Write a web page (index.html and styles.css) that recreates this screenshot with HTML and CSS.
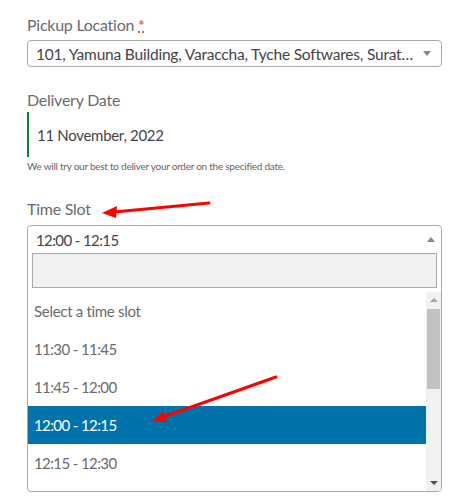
FILE: index.html
```html
<!DOCTYPE html>
<html>
<head>
<meta charset="utf-8">
<link rel="stylesheet" href="styles.css">
</head>
<body>
<div class="form">
  <div class="field">
    <label class="label">Pickup Location <abbr class="required" title="required">*</abbr></label>
    <div class="select">
      <span class="select-text">101, Yamuna Building, Varaccha, Tyche Softwares, Surat…</span>
      <span class="caret-down"></span>
    </div>
  </div>

  <div class="field field-date">
    <label class="label">Delivery Date</label>
    <div class="date-box">11 November, 2022</div>
    <p class="help">We will try our best to deliver your order on the specified date.</p>
  </div>

  <div class="field field-slot">
    <label class="label label-slot">Time Slot</label>
    <div class="s2">
      <div class="s2-selection">
        <span class="s2-text">12:00 - 12:15</span>
        <span class="caret-up"></span>
      </div>
      <div class="s2-search-wrap"><div class="s2-search"></div></div>
      <div class="s2-results">
        <ul class="s2-list">
          <li class="s2-item">Select a time slot</li>
          <li class="s2-item">11:30 - 11:45</li>
          <li class="s2-item">11:45 - 12:00</li>
          <li class="s2-item s2-item-active">12:00 - 12:15</li>
          <li class="s2-item">12:15 - 12:30</li>
        </ul>
        <div class="scrollbar">
          <span class="sb-up"></span>
          <span class="sb-thumb"></span>
          <span class="sb-down"></span>
        </div>
      </div>
    </div>
  </div>
</div>

<svg class="annotations" width="471" height="502" viewBox="0 0 471 502">
  <line x1="209" y1="203" x2="114" y2="212" stroke="#f00" stroke-width="3" stroke-linecap="round"/>
  <polygon points="102,213 117,206 116,218" fill="#f00"/>
  <line x1="276" y1="377" x2="163" y2="417" stroke="#f00" stroke-width="3" stroke-linecap="round"/>
  <polygon points="152,421 163,411 167,422" fill="#f00"/>
</svg>
</body>
</html>
```

FILE: styles.css
```css
html, body {
  margin: 0;
  padding: 0;
  background: #fff;
}

body {
  font-family: "Lato", "Open Sans", sans-serif;
  width: 471px;
  height: 502px;
  overflow: hidden;
  position: relative;
}

.form {
  padding: 13px 29px 0 27px;
  display: flex;
  flex-direction: column;
}

.label {
  display: block;
  font-size: 16px;
  letter-spacing: -0.25px;
  line-height: 24px;
  color: #6b6b6b;
  margin-bottom: 3px;
}

.label-slot {
  margin-bottom: 4px;
}

.required {
  color: #e2401c;
  text-decoration: underline dotted #e2401c;
  border: none;
}

.select {
  height: 27px;
  border: 1px solid #aaa;
  border-radius: 4px;
  box-sizing: border-box;
  display: flex;
  align-items: center;
  padding: 0 10px 0 8px;
  position: relative;
}

.select-text {
  flex: 1;
  min-width: 0;
  font-size: 15.5px;
  letter-spacing: -0.2px;
  color: #444;
  white-space: nowrap;
}

.caret-down {
  flex: none;
  width: 0;
  height: 0;
  border-left: 4px solid transparent;
  border-right: 4px solid transparent;
  border-top: 5px solid #888;
  margin-left: 8px;
}

.caret-up {
  width: 0;
  height: 0;
  border-left: 4px solid transparent;
  border-right: 4px solid transparent;
  border-bottom: 5px solid #888;
}

.field-date {
  margin-top: 21px;
}

.date-box {
  height: 45px;
  border-left: 2px solid #0f7b45;
  display: flex;
  align-items: center;
  padding-left: 8px;
  font-size: 15px;
  letter-spacing: -0.3px;
  color: #444;
  margin-top: -3px;
}

.help {
  margin: 2px 0 0 0;
  font-size: 10px;
  letter-spacing: -0.25px;
  line-height: 14px;
  color: #666;
}

.field-slot {
  margin-top: 24px;
}

.s2 {
  border: 1px solid #aaa;
  border-radius: 4px;
  height: 267px;
  box-sizing: border-box;
  display: flex;
  flex-direction: column;
  overflow: hidden;
}

.s2-selection {
  height: 27px;
  display: flex;
  align-items: center;
  justify-content: space-between;
  padding: 0 6px 0 8px;
  font-size: 15px;
  letter-spacing: -0.6px;
  color: #444;
}

.s2-search-wrap {
  padding: 0 4px;
}

.s2-search {
  height: 35px;
  border: 1px solid #aaa;
  background: #f1f1f1;
  box-sizing: border-box;
}

.s2-results {
  margin-top: 4px;
  flex: 1;
  display: flex;
  overflow: hidden;
}

.s2-list {
  list-style: none;
  margin: 0;
  padding: 0;
  flex: 1;
  overflow: hidden;
}

.s2-item {
  height: 38px;
  display: flex;
  align-items: center;
  padding-left: 6px;
  font-size: 15px;
  letter-spacing: -0.6px;
  color: #6b6b6b;
}

.s2-item:first-child {
  letter-spacing: -0.3px;
}

.s2-item-active {
  background: #0073aa;
  color: #fff;
}

.scrollbar {
  width: 15px;
  background: #f1f1f1;
  display: flex;
  flex-direction: column;
  align-items: center;
  position: relative;
}

.sb-up {
  margin-top: 6px;
  width: 0;
  height: 0;
  border-left: 4px solid transparent;
  border-right: 4px solid transparent;
  border-bottom: 4px solid #a3a3a3;
}

.sb-thumb {
  margin-top: 7px;
  width: 13px;
  height: 80px;
  background: #c1c1c1;
}

.sb-down {
  margin-top: auto;
  margin-bottom: 6px;
  width: 0;
  height: 0;
  border-left: 4px solid transparent;
  border-right: 4px solid transparent;
  border-top: 4px solid #505050;
}

.annotations {
  position: absolute;
  top: 0;
  left: 0;
  pointer-events: none;
}
```
